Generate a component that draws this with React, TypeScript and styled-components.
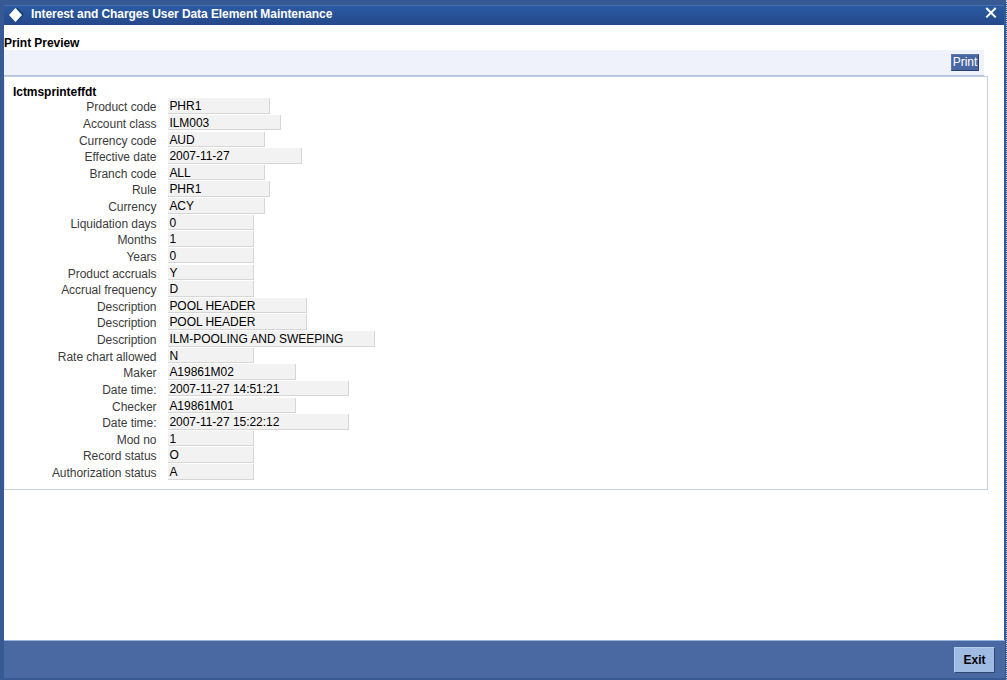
import styled, { createGlobalStyle } from "styled-components";

interface Field {
  label: string;
  value: string;
  width: number;
}

const fields: Field[] = [
  { label: "Product code", value: "PHR1", width: 102 },
  { label: "Account class", value: "ILM003", width: 113 },
  { label: "Currency code", value: "AUD", width: 97 },
  { label: "Effective date", value: "2007-11-27", width: 134 },
  { label: "Branch code", value: "ALL", width: 97 },
  { label: "Rule", value: "PHR1", width: 102 },
  { label: "Currency", value: "ACY", width: 97 },
  { label: "Liquidation days", value: "0", width: 86 },
  { label: "Months", value: "1", width: 86 },
  { label: "Years", value: "0", width: 86 },
  { label: "Product accruals", value: "Y", width: 86 },
  { label: "Accrual frequency", value: "D", width: 86 },
  { label: "Description", value: "POOL HEADER", width: 139 },
  { label: "Description", value: "POOL HEADER", width: 139 },
  { label: "Description", value: "ILM-POOLING AND SWEEPING", width: 207 },
  { label: "Rate chart allowed", value: "N", width: 86 },
  { label: "Maker", value: "A19861M02", width: 128 },
  { label: "Date time:", value: "2007-11-27 14:51:21", width: 181 },
  { label: "Checker", value: "A19861M01", width: 128 },
  { label: "Date time:", value: "2007-11-27 15:22:12", width: 181 },
  { label: "Mod no", value: "1", width: 86 },
  { label: "Record status", value: "O", width: 86 },
  { label: "Authorization status", value: "A", width: 86 },
];

const App: React.FC = () => {
  return (
    <>
      <GlobalStyle />
      <Window>
        <TitleBar>
          <svg width="18" height="18" viewBox="0 0 18 18">
            <path d="M10 0.5L17 7L10 15Z" fill="#12406f" />
            <path d="M8.5 1L15 8L8.5 15L2 8Z" fill="#fff" />
          </svg>
          <Title>Interest and Charges User Data Element Maintenance</Title>
          <CloseButton aria-label="Close">
            <svg width="12" height="12" viewBox="0 0 12 12">
              <path d="M1.3 1L10.7 10.4M10.7 1L1.3 10.4" stroke="#fff" strokeWidth="2" />
            </svg>
          </CloseButton>
        </TitleBar>
        <Body>
          <Heading>Print Preview</Heading>
          <Toolbar>
            <PrintButton>Print</PrintButton>
          </Toolbar>
          <Panel>
            <PanelTitle>Ictmsprinteffdt</PanelTitle>
            {fields.map((field, index) => (
              <Row key={index}>
                <Label>{field.label}</Label>
                <Value $width={field.width}>{field.value}</Value>
              </Row>
            ))}
          </Panel>
        </Body>
        <Footer>
          <ExitButton>Exit</ExitButton>
        </Footer>
      </Window>
    </>
  );
}

const GlobalStyle = createGlobalStyle`
  * {
    box-sizing: border-box;
  }
  body {
    margin: 0;
    overflow: hidden;
    font-family: "Liberation Sans", Arial, sans-serif;
    font-size: 12px;
  }
  button {
    padding: 0;
    font-family: inherit;
    font-size: 12px;
  }
`;
const Window = styled.div`
  width: 1007px;
  height: 680px;
  display: flex;
  flex-direction: column;
  padding: 5px 1px 2px 4px;
  background: #385a94;
  border-right: 1px dotted #c5cddd;
`;
const TitleBar = styled.header`
  height: 20px;
  flex-shrink: 0;
  display: flex;
  align-items: center;
  margin-right: 1px;
  padding: 0 7.5px 0 3px;
  border-top: 1px solid #4a6fab;
  background: linear-gradient(#2b5ba3, #25488a);
  color: white;
`;
const Title = styled.h1`
  flex: 1;
  margin: 0 0 2px 6px;
  font-size: 12px;
  line-height: 15px;
  font-weight: bold;
  letter-spacing: -0.07px;
`;
const CloseButton = styled.button`
  display: flex;
  margin-bottom: 5px;
  border: none;
  background: none;
`;
const Body = styled.main`
  flex: 1;
  margin-right: 1px;
  padding-top: 11px;
  background: white;
`;
const Heading = styled.h2`
  margin: 0;
  font-size: 12px;
  line-height: 14px;
  font-weight: bold;
  letter-spacing: -0.05px;
`;
const Toolbar = styled.div`
  width: 980px;
  height: 26px;
  display: flex;
  justify-content: flex-end;
  padding: 4px 5px 0 0;
  border-bottom: 1px solid #aec2dd;
  background: #eff2fb;
`;
const PrintButton = styled.button`
  width: 28px;
  height: 17px;
  padding-bottom: 1px;
  border: 1px solid;
  border-color: #5c79b0 #28406f #28406f #5c79b0;
  background: #4866a1;
  color: white;
  line-height: 14px;
`;
const Panel = styled.section`
  width: 984px;
  height: 414px;
  padding: 8px 0 0 8px;
  border: 1px solid #c3d2df;
  border-left-color: #dfe7ef;
`;
const PanelTitle = styled.h3`
  height: 13.25px;
  margin: 0;
  font-size: 12px;
  line-height: 14px;
  font-weight: bold;
  letter-spacing: -0.05px;
`;
const Row = styled.div`
  height: 16.64px;
  display: flex;
`;
const Label = styled.span`
  width: 143.5px;
  margin-right: 11.5px;
  color: #3b3b3b;
  line-height: 18.2px;
  letter-spacing: -0.04px;
  text-align: right;
`;
const Value = styled.span<{ $width: number }>`
  width: ${props => props.$width}px;
  height: 15.6px;
  padding-left: 1.4px;
  border-right: 1px solid #d6d6d6;
  border-bottom: 1px solid #d6d6d6;
  background: #f2f2f2;
  color: black;
  line-height: 16.2px;
  letter-spacing: -0.03px;
  white-space: nowrap;
`;
const Footer = styled.footer`
  height: 38px;
  flex-shrink: 0;
  display: flex;
  justify-content: flex-end;
  padding: 6px 10px 0 0;
  border-top: 1px solid #9ab5dc;
  background: #4a69a2;
`;
const ExitButton = styled.button`
  width: 41px;
  height: 26px;
  border: 1px solid;
  border-color: #b5cbec #31486f #31486f #b5cbec;
  background: #a0bbe3;
  color: black;
  font-weight: bold;
`;

export default App;
